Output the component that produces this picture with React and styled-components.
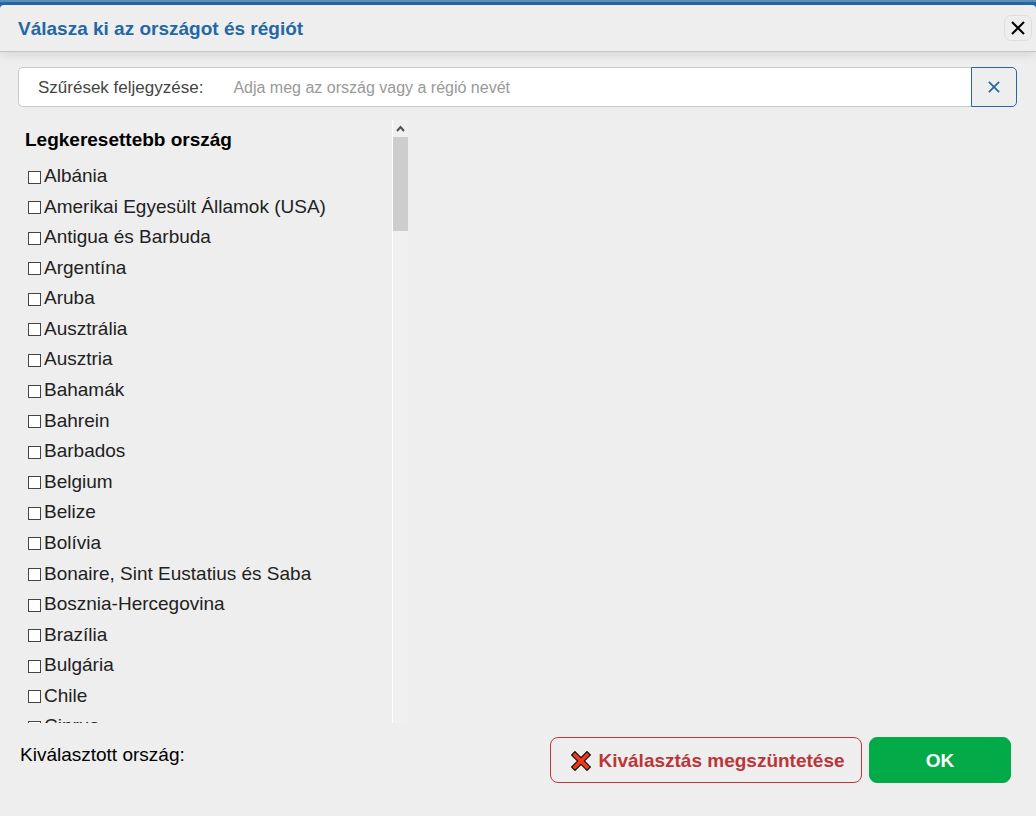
import React, { useState } from "react";
import styled, { createGlobalStyle } from "styled-components";

const GlobalStyle = createGlobalStyle`
  *, *::before, *::after { box-sizing: border-box; }
  body {
    margin: 0;
    background: #2368a5;
    font-family: "Liberation Sans", Arial, sans-serif;
    color: #000;
  }
  button, input { font-family: inherit; margin: 0; }
`;

const Page = styled.div`
  display: flex;
  flex-direction: column;
  min-height: 100vh;
  border-top: 2px solid #5d8fbd;
  padding-top: 3px;
`;

const Dialog = styled.main`
  flex: 1;
  display: flex;
  flex-direction: column;
  background: #eeeeee;
  border-radius: 4px 4px 0 0;
`;

const Header = styled.header`
  display: flex;
  align-items: center;
  justify-content: space-between;
  height: 47px;
  padding: 0 4px 0 18px;
  border-bottom: 1px solid #c6c6c6;
  box-shadow: 0 3px 10px rgba(0, 0, 0, 0.1);
`;

const Title = styled.h1`
  margin: 0;
  padding-top: 2px;
  font-size: 19px;
  line-height: 24px;
  color: #2368a5;
`;

const CloseButton = styled.button`
  display: grid;
  place-items: center;
  width: 28px;
  height: 26px;
  padding: 0;
  border: 1px solid #dedede;
  border-radius: 7px;
  background: transparent;
  color: #000;
`;

const SearchBar = styled.div`
  display: flex;
  height: 40px;
  margin: 15px 19px 0 18px;
`;

const SearchField = styled.label`
  flex: 1;
  display: flex;
  align-items: center;
  gap: 30px;
  padding: 2px 0 0 19px;
  border: 1px solid #c8c8c8;
  border-right: 0;
  border-radius: 5px 0 0 5px;
  background: #fff;
  font-size: 17px;
  color: #444;
`;

const SearchInput = styled.input`
  flex: 1;
  min-width: 0;
  height: 34px;
  padding: 0;
  border: 0;
  outline: 0;
  background: transparent;
  font-size: 16px;
  color: #444;
  &::placeholder { color: #999; opacity: 1; }
`;

const ClearButton = styled.button`
  display: grid;
  place-items: center;
  width: 46px;
  padding: 0;
  border: 1px solid #2368a5;
  border-radius: 0 5px 5px 0;
  background: #eeeeee;
  color: #2368a5;
`;

const ListPanel = styled.section`
  display: flex;
  width: 390px;
  height: 603px;
  margin: 13px 0 0 18px;
  overflow: hidden;
`;

const ListContent = styled.div`
  flex: 1;
  height: 603px;
  overflow: hidden;
  padding: 8px 0 0 7px;
`;

const ListTitle = styled.h2`
  margin: 0 0 9px;
  font-size: 19px;
  line-height: 24px;
`;

const CountryList = styled.ul`
  display: grid;
  grid-auto-rows: 1fr;
  height: 581px;
  margin: 0;
  padding: 0 0 0 3px;
  list-style: none;
`;

const CountryLabel = styled.label`
  display: flex;
  align-items: center;
  gap: 3px;
  font-size: 19px;
  line-height: 30px;
  color: #222;
`;

const Checkbox = styled.input`
  appearance: none;
  flex: none;
  width: 13px;
  height: 13px;
  margin-top: 2px;
  border: 1px solid #444;
  background: #fff;
  &:checked { box-shadow: inset 0 0 0 2px #fff; background: #2368a5; }
`;

const Scrollbar = styled.div`
  width: 16px;
  border-left: 1px solid #fff;
  background: #f0f0f0;
`;

const ScrollUp = styled.button`
  display: grid;
  place-items: center;
  width: 15px;
  height: 17px;
  padding: 0;
  border: 0;
  background: transparent;
  color: #505050;
`;

const ScrollThumb = styled.div`
  height: 94px;
  background: #cdcdcd;
`;

const Footer = styled.footer`
  display: flex;
  align-items: flex-start;
  gap: 7px;
  padding: 14px 25px 33px 20px;
`;

const Selected = styled.p`
  flex: 1;
  margin: 6px 0 0;
  font-size: 19px;
  line-height: 24px;
`;

const ActionButton = styled.button`
  display: flex;
  align-items: center;
  justify-content: center;
  gap: 7px;
  width: ${(p) => p.$width};
  height: 46px;
  padding: 2px 0 0;
  border: 1px solid ${(p) => (p.$primary ? "#02ab47" : "#bb3639")};
  border-radius: 8px;
  background: ${(p) => (p.$primary ? "#02ab47" : "transparent")};
  color: ${(p) => (p.$primary ? "#fff" : "#bb3639")};
  font-size: 19px;
  font-weight: bold;
`;

const ClearSelectionButton = styled(ActionButton)`
  padding-left: 4px;
`;

function Cross({ size, weight }) {
  return (
    <svg width={size} height={size} viewBox="0 0 14 14" fill="none" stroke="currentColor" strokeWidth={weight} aria-hidden="true">
      <path d="M1 1L13 13M13 1L1 13" />
    </svg>
  );
}

function RedCross() {
  return (
    <svg width="20" height="20" viewBox="0 0 20 20" fill="none" aria-hidden="true">
      <path d="M4 4L16 16M16 4L4 16" stroke="#111" strokeWidth="6" strokeLinecap="square" />
      <path d="M4 4L16 16M16 4L4 16" stroke="#f03a17" strokeWidth="3.600" strokeLinecap="square" />
    </svg>
  );
}

const countries = [
  "Albánia", "Amerikai Egyesült Államok (USA)", "Antigua és Barbuda", "Argentína",
  "Aruba", "Ausztrália", "Ausztria", "Bahamák", "Bahrein", "Barbados", "Belgium",
  "Belize", "Bolívia", "Bonaire, Sint Eustatius és Saba", "Bosznia-Hercegovina",
  "Brazília", "Bulgária", "Chile", "Ciprus",
];

export default function App() {
  const [query, setQuery] = useState("");
  const [selected, setSelected] = useState([]);
  const toggle = (name) =>
    setSelected((s) => (s.includes(name) ? s.filter((n) => n !== name) : [...s, name]));

  return (
    <Page>
      <GlobalStyle />
      <Dialog>
        <Header>
          <Title>Válasza ki az országot és régiót</Title>
          <CloseButton type="button" aria-label="Bezárás"><Cross size={14} weight={2} /></CloseButton>
        </Header>
        <SearchBar>
          <SearchField>
            Szűrések feljegyzése:
            <SearchInput
              value={query}
              onChange={(e) => setQuery(e.target.value)}
              placeholder="Adja meg az ország vagy a régió nevét"
            />
          </SearchField>
          <ClearButton type="button" aria-label="Törlés" onClick={() => setQuery("")}>
            <Cross size={12} weight={2} />
          </ClearButton>
        </SearchBar>
        <ListPanel>
          <ListContent>
            <ListTitle>Legkeresettebb ország</ListTitle>
            <CountryList>
              {countries.map((name) => (
                <li key={name}>
                  <CountryLabel>
                    <Checkbox type="checkbox" checked={selected.includes(name)} onChange={() => toggle(name)} />
                    {name}
                  </CountryLabel>
                </li>
              ))}
            </CountryList>
          </ListContent>
          <Scrollbar>
            <ScrollUp type="button" aria-label="Fel">
              <svg width="9" height="7" viewBox="0 0 9 7" fill="none" stroke="currentColor" strokeWidth="2" aria-hidden="true">
                <path d="M1 6L4.500 2L8 6" />
              </svg>
            </ScrollUp>
            <ScrollThumb />
          </Scrollbar>
        </ListPanel>
        <Footer>
          <Selected>Kiválasztott ország: {selected.join(", ")}</Selected>
          <ClearSelectionButton type="button" $width="312px" onClick={() => setSelected([])}>
            <RedCross />
            Kiválasztás megszüntetése
          </ClearSelectionButton>
          <ActionButton type="button" $primary $width="142px">OK</ActionButton>
        </Footer>
      </Dialog>
    </Page>
  );
}
